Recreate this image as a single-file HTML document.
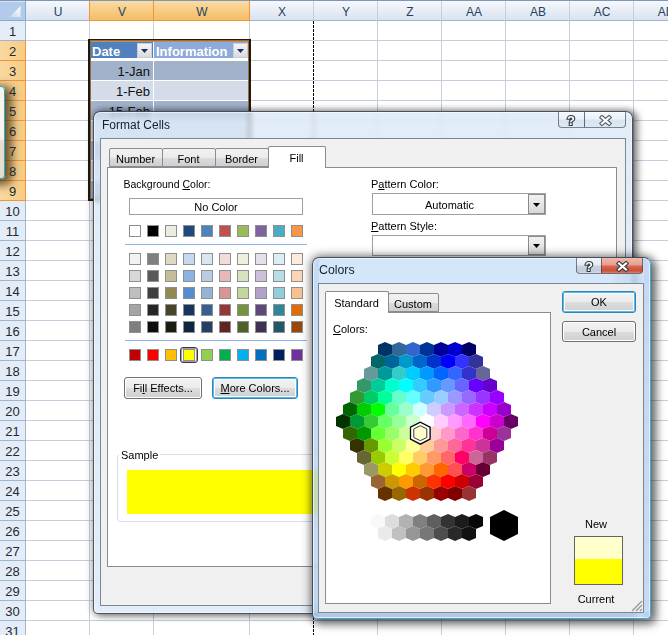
<!DOCTYPE html><html><head><meta charset="utf-8"><style>

*{box-sizing:border-box;margin:0;padding:0}
html,body{width:668px;height:635px;overflow:hidden;background:#fff;font-family:"Liberation Sans",sans-serif}
.abs{position:absolute}
.t{position:absolute;white-space:nowrap;line-height:1}

</style></head><body>
<div class="abs" style="left:89px;top:20px;width:1px;height:615px;background:#C8CDDD"></div>
<div class="abs" style="left:153px;top:20px;width:1px;height:615px;background:#C8CDDD"></div>
<div class="abs" style="left:249px;top:20px;width:1px;height:615px;background:#C8CDDD"></div>
<div class="abs" style="left:313px;top:20px;width:1px;height:615px;background:#C8CDDD"></div>
<div class="abs" style="left:377px;top:20px;width:1px;height:615px;background:#C8CDDD"></div>
<div class="abs" style="left:441px;top:20px;width:1px;height:615px;background:#C8CDDD"></div>
<div class="abs" style="left:505px;top:20px;width:1px;height:615px;background:#C8CDDD"></div>
<div class="abs" style="left:569px;top:20px;width:1px;height:615px;background:#C8CDDD"></div>
<div class="abs" style="left:633px;top:20px;width:1px;height:615px;background:#C8CDDD"></div>
<div class="abs" style="left:697px;top:20px;width:1px;height:615px;background:#C8CDDD"></div>
<div class="abs" style="left:25px;top:40px;width:643px;height:1px;background:#C8CDDD"></div>
<div class="abs" style="left:25px;top:60px;width:643px;height:1px;background:#C8CDDD"></div>
<div class="abs" style="left:25px;top:80px;width:643px;height:1px;background:#C8CDDD"></div>
<div class="abs" style="left:25px;top:100px;width:643px;height:1px;background:#C8CDDD"></div>
<div class="abs" style="left:25px;top:120px;width:643px;height:1px;background:#C8CDDD"></div>
<div class="abs" style="left:25px;top:140px;width:643px;height:1px;background:#C8CDDD"></div>
<div class="abs" style="left:25px;top:160px;width:643px;height:1px;background:#C8CDDD"></div>
<div class="abs" style="left:25px;top:180px;width:643px;height:1px;background:#C8CDDD"></div>
<div class="abs" style="left:25px;top:200px;width:643px;height:1px;background:#C8CDDD"></div>
<div class="abs" style="left:25px;top:220px;width:643px;height:1px;background:#C8CDDD"></div>
<div class="abs" style="left:25px;top:240px;width:643px;height:1px;background:#C8CDDD"></div>
<div class="abs" style="left:25px;top:260px;width:643px;height:1px;background:#C8CDDD"></div>
<div class="abs" style="left:25px;top:280px;width:643px;height:1px;background:#C8CDDD"></div>
<div class="abs" style="left:25px;top:300px;width:643px;height:1px;background:#C8CDDD"></div>
<div class="abs" style="left:25px;top:320px;width:643px;height:1px;background:#C8CDDD"></div>
<div class="abs" style="left:25px;top:340px;width:643px;height:1px;background:#C8CDDD"></div>
<div class="abs" style="left:25px;top:360px;width:643px;height:1px;background:#C8CDDD"></div>
<div class="abs" style="left:25px;top:380px;width:643px;height:1px;background:#C8CDDD"></div>
<div class="abs" style="left:25px;top:400px;width:643px;height:1px;background:#C8CDDD"></div>
<div class="abs" style="left:25px;top:420px;width:643px;height:1px;background:#C8CDDD"></div>
<div class="abs" style="left:25px;top:440px;width:643px;height:1px;background:#C8CDDD"></div>
<div class="abs" style="left:25px;top:460px;width:643px;height:1px;background:#C8CDDD"></div>
<div class="abs" style="left:25px;top:480px;width:643px;height:1px;background:#C8CDDD"></div>
<div class="abs" style="left:25px;top:500px;width:643px;height:1px;background:#C8CDDD"></div>
<div class="abs" style="left:25px;top:520px;width:643px;height:1px;background:#C8CDDD"></div>
<div class="abs" style="left:25px;top:540px;width:643px;height:1px;background:#C8CDDD"></div>
<div class="abs" style="left:25px;top:560px;width:643px;height:1px;background:#C8CDDD"></div>
<div class="abs" style="left:25px;top:580px;width:643px;height:1px;background:#C8CDDD"></div>
<div class="abs" style="left:25px;top:600px;width:643px;height:1px;background:#C8CDDD"></div>
<div class="abs" style="left:25px;top:620px;width:643px;height:1px;background:#C8CDDD"></div>
<div class="abs" style="left:313px;top:21px;width:1px;height:614px;background:repeating-linear-gradient(#000 0 3px,#fff 3px 4px)"></div>
<div class="abs" style="left:0;top:0;width:668px;height:1px;background:#7E97B8"></div>
<div class="abs" style="left:26px;top:1px;width:64px;height:20px;background:linear-gradient(#F6F8FC,#E4EBF5 60%,#DAE3F0);border-bottom:1px solid #9EB6CE;border-right:1px solid #C5D1E0"></div>
<div class="t" style="left:26px;width:64px;text-align:center;top:6px;font-size:12px;color:#27405E">U</div>
<div class="abs" style="left:90px;top:1px;width:64px;height:20px;background:linear-gradient(#F9DCA6,#F6C97C 60%,#F3BE67);border-bottom:1px solid #F29536;border-right:1px solid #F29536"></div>
<div class="t" style="left:90px;width:64px;text-align:center;top:6px;font-size:12px;color:#27405E">V</div>
<div class="abs" style="left:154px;top:1px;width:96px;height:20px;background:linear-gradient(#F9DCA6,#F6C97C 60%,#F3BE67);border-bottom:1px solid #F29536;border-right:1px solid #F29536"></div>
<div class="t" style="left:154px;width:96px;text-align:center;top:6px;font-size:12px;color:#27405E">W</div>
<div class="abs" style="left:250px;top:1px;width:64px;height:20px;background:linear-gradient(#F6F8FC,#E4EBF5 60%,#DAE3F0);border-bottom:1px solid #9EB6CE;border-right:1px solid #C5D1E0"></div>
<div class="t" style="left:250px;width:64px;text-align:center;top:6px;font-size:12px;color:#27405E">X</div>
<div class="abs" style="left:314px;top:1px;width:64px;height:20px;background:linear-gradient(#F6F8FC,#E4EBF5 60%,#DAE3F0);border-bottom:1px solid #9EB6CE;border-right:1px solid #C5D1E0"></div>
<div class="t" style="left:314px;width:64px;text-align:center;top:6px;font-size:12px;color:#27405E">Y</div>
<div class="abs" style="left:378px;top:1px;width:64px;height:20px;background:linear-gradient(#F6F8FC,#E4EBF5 60%,#DAE3F0);border-bottom:1px solid #9EB6CE;border-right:1px solid #C5D1E0"></div>
<div class="t" style="left:378px;width:64px;text-align:center;top:6px;font-size:12px;color:#27405E">Z</div>
<div class="abs" style="left:442px;top:1px;width:64px;height:20px;background:linear-gradient(#F6F8FC,#E4EBF5 60%,#DAE3F0);border-bottom:1px solid #9EB6CE;border-right:1px solid #C5D1E0"></div>
<div class="t" style="left:442px;width:64px;text-align:center;top:6px;font-size:12px;color:#27405E">AA</div>
<div class="abs" style="left:506px;top:1px;width:64px;height:20px;background:linear-gradient(#F6F8FC,#E4EBF5 60%,#DAE3F0);border-bottom:1px solid #9EB6CE;border-right:1px solid #C5D1E0"></div>
<div class="t" style="left:506px;width:64px;text-align:center;top:6px;font-size:12px;color:#27405E">AB</div>
<div class="abs" style="left:570px;top:1px;width:64px;height:20px;background:linear-gradient(#F6F8FC,#E4EBF5 60%,#DAE3F0);border-bottom:1px solid #9EB6CE;border-right:1px solid #C5D1E0"></div>
<div class="t" style="left:570px;width:64px;text-align:center;top:6px;font-size:12px;color:#27405E">AC</div>
<div class="abs" style="left:634px;top:1px;width:64px;height:20px;background:linear-gradient(#F6F8FC,#E4EBF5 60%,#DAE3F0);border-bottom:1px solid #9EB6CE;border-right:1px solid #C5D1E0"></div>
<div class="t" style="left:634px;width:64px;text-align:center;top:6px;font-size:12px;color:#27405E">AD</div>
<div class="abs" style="left:89px;top:1px;width:1px;height:20px;background:#F29536"></div>
<div class="abs" style="left:0;top:1px;width:26px;height:20px;background:#B3CBEA;border-right:1px solid #8CA8CC;border-bottom:1px solid #8CA8CC;box-shadow:inset 0 1px 0 #D6E4F6"></div>
<svg class="abs" style="left:0;top:0" width="25" height="21"><defs><linearGradient id="cg" x1="0" y1="1" x2="1" y2="0"><stop offset="0" stop-color="#C4D6EE"/><stop offset="1" stop-color="#FFFFFF"/></linearGradient></defs><polygon points="20.5,6 20.5,17 9.5,17" fill="url(#cg)"/></svg>
<div class="abs" style="left:0;top:21px;width:26px;height:20px;background:#E4ECF7;border-bottom:1px solid #9EB6CE;border-right:1px solid #9EB6CE"></div>
<div class="t" style="left:0;width:25px;text-align:center;top:25px;font-size:13px;color:#1E2A36">1</div>
<div class="abs" style="left:0;top:41px;width:26px;height:20px;background:linear-gradient(90deg,#F9D9A0,#F7CC84);border-bottom:1px solid #F29536;border-right:1px solid #F29536"></div>
<div class="t" style="left:0;width:25px;text-align:center;top:45px;font-size:13px;color:#1E2A36">2</div>
<div class="abs" style="left:0;top:61px;width:26px;height:20px;background:linear-gradient(90deg,#F9D9A0,#F7CC84);border-bottom:1px solid #F29536;border-right:1px solid #F29536"></div>
<div class="t" style="left:0;width:25px;text-align:center;top:65px;font-size:13px;color:#1E2A36">3</div>
<div class="abs" style="left:0;top:81px;width:26px;height:20px;background:linear-gradient(90deg,#F9D9A0,#F7CC84);border-bottom:1px solid #F29536;border-right:1px solid #F29536"></div>
<div class="t" style="left:0;width:25px;text-align:center;top:85px;font-size:13px;color:#1E2A36">4</div>
<div class="abs" style="left:0;top:101px;width:26px;height:20px;background:linear-gradient(90deg,#F9D9A0,#F7CC84);border-bottom:1px solid #F29536;border-right:1px solid #F29536"></div>
<div class="t" style="left:0;width:25px;text-align:center;top:105px;font-size:13px;color:#1E2A36">5</div>
<div class="abs" style="left:0;top:121px;width:26px;height:20px;background:linear-gradient(90deg,#F9D9A0,#F7CC84);border-bottom:1px solid #F29536;border-right:1px solid #F29536"></div>
<div class="t" style="left:0;width:25px;text-align:center;top:125px;font-size:13px;color:#1E2A36">6</div>
<div class="abs" style="left:0;top:141px;width:26px;height:20px;background:linear-gradient(90deg,#F9D9A0,#F7CC84);border-bottom:1px solid #F29536;border-right:1px solid #F29536"></div>
<div class="t" style="left:0;width:25px;text-align:center;top:145px;font-size:13px;color:#1E2A36">7</div>
<div class="abs" style="left:0;top:161px;width:26px;height:20px;background:linear-gradient(90deg,#F9D9A0,#F7CC84);border-bottom:1px solid #F29536;border-right:1px solid #F29536"></div>
<div class="t" style="left:0;width:25px;text-align:center;top:165px;font-size:13px;color:#1E2A36">8</div>
<div class="abs" style="left:0;top:181px;width:26px;height:20px;background:linear-gradient(90deg,#F9D9A0,#F7CC84);border-bottom:1px solid #F29536;border-right:1px solid #F29536"></div>
<div class="t" style="left:0;width:25px;text-align:center;top:185px;font-size:13px;color:#1E2A36">9</div>
<div class="abs" style="left:0;top:201px;width:26px;height:20px;background:#E4ECF7;border-bottom:1px solid #9EB6CE;border-right:1px solid #9EB6CE"></div>
<div class="t" style="left:0;width:25px;text-align:center;top:205px;font-size:13px;color:#1E2A36">10</div>
<div class="abs" style="left:0;top:221px;width:26px;height:20px;background:#E4ECF7;border-bottom:1px solid #9EB6CE;border-right:1px solid #9EB6CE"></div>
<div class="t" style="left:0;width:25px;text-align:center;top:225px;font-size:13px;color:#1E2A36">11</div>
<div class="abs" style="left:0;top:241px;width:26px;height:20px;background:#E4ECF7;border-bottom:1px solid #9EB6CE;border-right:1px solid #9EB6CE"></div>
<div class="t" style="left:0;width:25px;text-align:center;top:245px;font-size:13px;color:#1E2A36">12</div>
<div class="abs" style="left:0;top:261px;width:26px;height:20px;background:#E4ECF7;border-bottom:1px solid #9EB6CE;border-right:1px solid #9EB6CE"></div>
<div class="t" style="left:0;width:25px;text-align:center;top:265px;font-size:13px;color:#1E2A36">13</div>
<div class="abs" style="left:0;top:281px;width:26px;height:20px;background:#E4ECF7;border-bottom:1px solid #9EB6CE;border-right:1px solid #9EB6CE"></div>
<div class="t" style="left:0;width:25px;text-align:center;top:285px;font-size:13px;color:#1E2A36">14</div>
<div class="abs" style="left:0;top:301px;width:26px;height:20px;background:#E4ECF7;border-bottom:1px solid #9EB6CE;border-right:1px solid #9EB6CE"></div>
<div class="t" style="left:0;width:25px;text-align:center;top:305px;font-size:13px;color:#1E2A36">15</div>
<div class="abs" style="left:0;top:321px;width:26px;height:20px;background:#E4ECF7;border-bottom:1px solid #9EB6CE;border-right:1px solid #9EB6CE"></div>
<div class="t" style="left:0;width:25px;text-align:center;top:325px;font-size:13px;color:#1E2A36">16</div>
<div class="abs" style="left:0;top:341px;width:26px;height:20px;background:#E4ECF7;border-bottom:1px solid #9EB6CE;border-right:1px solid #9EB6CE"></div>
<div class="t" style="left:0;width:25px;text-align:center;top:345px;font-size:13px;color:#1E2A36">17</div>
<div class="abs" style="left:0;top:361px;width:26px;height:20px;background:#E4ECF7;border-bottom:1px solid #9EB6CE;border-right:1px solid #9EB6CE"></div>
<div class="t" style="left:0;width:25px;text-align:center;top:365px;font-size:13px;color:#1E2A36">18</div>
<div class="abs" style="left:0;top:381px;width:26px;height:20px;background:#E4ECF7;border-bottom:1px solid #9EB6CE;border-right:1px solid #9EB6CE"></div>
<div class="t" style="left:0;width:25px;text-align:center;top:385px;font-size:13px;color:#1E2A36">19</div>
<div class="abs" style="left:0;top:401px;width:26px;height:20px;background:#E4ECF7;border-bottom:1px solid #9EB6CE;border-right:1px solid #9EB6CE"></div>
<div class="t" style="left:0;width:25px;text-align:center;top:405px;font-size:13px;color:#1E2A36">20</div>
<div class="abs" style="left:0;top:421px;width:26px;height:20px;background:#E4ECF7;border-bottom:1px solid #9EB6CE;border-right:1px solid #9EB6CE"></div>
<div class="t" style="left:0;width:25px;text-align:center;top:425px;font-size:13px;color:#1E2A36">21</div>
<div class="abs" style="left:0;top:441px;width:26px;height:20px;background:#E4ECF7;border-bottom:1px solid #9EB6CE;border-right:1px solid #9EB6CE"></div>
<div class="t" style="left:0;width:25px;text-align:center;top:445px;font-size:13px;color:#1E2A36">22</div>
<div class="abs" style="left:0;top:461px;width:26px;height:20px;background:#E4ECF7;border-bottom:1px solid #9EB6CE;border-right:1px solid #9EB6CE"></div>
<div class="t" style="left:0;width:25px;text-align:center;top:465px;font-size:13px;color:#1E2A36">23</div>
<div class="abs" style="left:0;top:481px;width:26px;height:20px;background:#E4ECF7;border-bottom:1px solid #9EB6CE;border-right:1px solid #9EB6CE"></div>
<div class="t" style="left:0;width:25px;text-align:center;top:485px;font-size:13px;color:#1E2A36">24</div>
<div class="abs" style="left:0;top:501px;width:26px;height:20px;background:#E4ECF7;border-bottom:1px solid #9EB6CE;border-right:1px solid #9EB6CE"></div>
<div class="t" style="left:0;width:25px;text-align:center;top:505px;font-size:13px;color:#1E2A36">25</div>
<div class="abs" style="left:0;top:521px;width:26px;height:20px;background:#E4ECF7;border-bottom:1px solid #9EB6CE;border-right:1px solid #9EB6CE"></div>
<div class="t" style="left:0;width:25px;text-align:center;top:525px;font-size:13px;color:#1E2A36">26</div>
<div class="abs" style="left:0;top:541px;width:26px;height:20px;background:#E4ECF7;border-bottom:1px solid #9EB6CE;border-right:1px solid #9EB6CE"></div>
<div class="t" style="left:0;width:25px;text-align:center;top:545px;font-size:13px;color:#1E2A36">27</div>
<div class="abs" style="left:0;top:561px;width:26px;height:20px;background:#E4ECF7;border-bottom:1px solid #9EB6CE;border-right:1px solid #9EB6CE"></div>
<div class="t" style="left:0;width:25px;text-align:center;top:565px;font-size:13px;color:#1E2A36">28</div>
<div class="abs" style="left:0;top:581px;width:26px;height:20px;background:#E4ECF7;border-bottom:1px solid #9EB6CE;border-right:1px solid #9EB6CE"></div>
<div class="t" style="left:0;width:25px;text-align:center;top:585px;font-size:13px;color:#1E2A36">29</div>
<div class="abs" style="left:0;top:601px;width:26px;height:20px;background:#E4ECF7;border-bottom:1px solid #9EB6CE;border-right:1px solid #9EB6CE"></div>
<div class="t" style="left:0;width:25px;text-align:center;top:605px;font-size:13px;color:#1E2A36">30</div>
<div class="abs" style="left:0;top:621px;width:26px;height:20px;background:#E4ECF7;border-bottom:1px solid #9EB6CE;border-right:1px solid #9EB6CE"></div>
<div class="t" style="left:0;width:25px;text-align:center;top:625px;font-size:13px;color:#1E2A36">31</div>
<div class="abs" style="left:89px;top:40px;width:161px;height:160px;background:#fff"></div>
<div class="abs" style="left:91px;top:42px;width:62px;height:16px;background:#5080BE"></div>
<div class="abs" style="left:154px;top:42px;width:94px;height:16px;background:#8DAADA"></div>
<div class="abs" style="left:91px;top:61px;width:62px;height:19px;background:#A3B2CB"></div>
<div class="abs" style="left:154px;top:61px;width:94px;height:19px;background:#A3B2CB"></div>
<div class="abs" style="left:91px;top:81px;width:62px;height:19px;background:#D4DCEA"></div>
<div class="abs" style="left:154px;top:81px;width:94px;height:19px;background:#D4DCEA"></div>
<div class="abs" style="left:91px;top:101px;width:62px;height:19px;background:#A3B2CB"></div>
<div class="abs" style="left:154px;top:101px;width:94px;height:19px;background:#A3B2CB"></div>
<div class="abs" style="left:91px;top:121px;width:62px;height:19px;background:#D4DCEA"></div>
<div class="abs" style="left:154px;top:121px;width:94px;height:19px;background:#D4DCEA"></div>
<div class="abs" style="left:91px;top:141px;width:62px;height:19px;background:#A3B2CB"></div>
<div class="abs" style="left:154px;top:141px;width:94px;height:19px;background:#A3B2CB"></div>
<div class="abs" style="left:91px;top:161px;width:62px;height:19px;background:#D4DCEA"></div>
<div class="abs" style="left:154px;top:161px;width:94px;height:19px;background:#D4DCEA"></div>
<div class="abs" style="left:91px;top:181px;width:62px;height:19px;background:#A3B2CB"></div>
<div class="abs" style="left:154px;top:181px;width:94px;height:19px;background:#A3B2CB"></div>
<div class="abs" style="left:88px;top:39px;width:163px;height:162px;border:2px solid #1E1812;border-top-width:1px;box-shadow:inset 0 0 0 1px #9A6A38"></div>
<div class="abs" style="left:91px;top:41px;width:157px;height:1px;background:#C98F4E"></div>
<div class="t" style="left:92px;top:45px;font-size:13px;font-weight:bold;color:#fff">Date</div>
<div class="t" style="left:156px;top:45px;font-size:13px;font-weight:bold;color:#fff">Information</div>
<div class="abs" style="left:137px;top:43px;width:15px;height:15px;background:linear-gradient(#F4F4F4,#DCDCDC);border:1px solid #C9CFD8"></div>
<svg class="abs" style="left:137px;top:43px" width="15" height="15"><polygon points="4,6 11,6 7.5,10" fill="#1F2F6A"/></svg>
<div class="abs" style="left:233px;top:43px;width:15px;height:15px;background:linear-gradient(#F4F4F4,#DCDCDC);border:1px solid #C9CFD8"></div>
<svg class="abs" style="left:233px;top:43px" width="15" height="15"><polygon points="4,6 11,6 7.5,10" fill="#1F2F6A"/></svg>
<div class="t" style="right:518px;top:65px;font-size:13px;color:#111">1-Jan</div>
<div class="t" style="right:518px;top:85px;font-size:13px;color:#111">1-Feb</div>
<div class="t" style="right:518px;top:105px;font-size:13px;color:#111">15-Feb</div>
<div class="abs" style="left:-20px;top:86px;width:25px;height:93px;background:linear-gradient(#F6F4EF 56%,#E2DED4 60%);border:1.5px solid #2AA8BC;border-radius:4px;box-shadow:4px 3px 10px 3px rgba(60,40,10,0.75)"></div>
<div class="abs" style="left:0;top:0;width:668px;height:635px;z-index:10"><div class="abs" style="left:93px;top:111px;width:540px;height:503px;border-radius:7px 7px 5px 5px;border:1px solid rgba(20,30,45,0.75);background:rgba(215,230,247,0.72);backdrop-filter:blur(2.5px);box-shadow:0 0 7px 1px rgba(0,0,0,0.3), 4px 1px 7px 1px rgba(0,0,0,0.4), inset 0 0 0 1px rgba(255,255,255,0.6)"></div>
<div class="t" style="left:102px;top:119px;font-size:12px;color:#15202C">Format Cells</div>
<div class="abs" style="left:558px;top:112px;width:27px;height:16px;border:1px solid rgba(40,50,70,0.6);border-top:none;border-radius:0 0 0 4px;background:linear-gradient(rgba(252,253,255,0.75),rgba(238,244,250,0.6) 45%,rgba(212,224,238,0.6) 55%,rgba(220,230,242,0.6))"></div>
<div class="abs" style="left:584px;top:112px;width:42px;height:16px;border:1px solid rgba(40,50,70,0.6);border-top:none;border-radius:0 0 4px 0;background:linear-gradient(rgba(252,253,255,0.75),rgba(238,244,250,0.6) 45%,rgba(212,224,238,0.6) 55%,rgba(220,230,242,0.6))"></div>
<svg class="abs" style="left:565.0px;top:113.0px" width="12" height="14"><text x="6" y="12" text-anchor="middle" font-family="Liberation Sans" font-weight="bold" font-size="13" fill="#fff" stroke="#2E3640" stroke-width="2.2" paint-order="stroke fill">?</text></svg>
<svg class="abs" style="left:598.5px;top:114.5px" width="13" height="12"><path d="M3 2.5 L10 8.5 M10 2.5 L3 8.5" stroke="#5A626C" stroke-width="4.4" stroke-linecap="square"/><path d="M3 2.5 L10 8.5 M10 2.5 L3 8.5" stroke="#fff" stroke-width="2.2" stroke-linecap="square"/></svg>
<div class="abs" style="left:100px;top:138px;width:526px;height:468px;background:#F0F0F0;border:1px solid #7C8794"></div>
<div class="abs" style="left:109px;top:148px;width:54px;height:19px;background:linear-gradient(#F2F2F2,#EBEBEB 50%,#DDDDDD 51%,#CFCFCF);border:1px solid #898C95;border-radius:2px 2px 0 0;z-index:1"></div>
<div class="t" style="left:109px;width:53px;text-align:center;top:153.5px;font-size:11px;color:#000;z-index:3">Number</div>
<div class="abs" style="left:162px;top:148px;width:54px;height:19px;background:linear-gradient(#F2F2F2,#EBEBEB 50%,#DDDDDD 51%,#CFCFCF);border:1px solid #898C95;border-radius:2px 2px 0 0;z-index:1"></div>
<div class="t" style="left:162px;width:53px;text-align:center;top:153.5px;font-size:11px;color:#000;z-index:3">Font</div>
<div class="abs" style="left:215px;top:148px;width:54px;height:19px;background:linear-gradient(#F2F2F2,#EBEBEB 50%,#DDDDDD 51%,#CFCFCF);border:1px solid #898C95;border-radius:2px 2px 0 0;z-index:1"></div>
<div class="t" style="left:215px;width:53px;text-align:center;top:153.5px;font-size:11px;color:#000;z-index:3">Border</div>
<div class="abs" style="left:107px;top:167px;width:510px;height:400px;background:#fff;border:1px solid #898C95;z-index:1"></div>
<div class="abs" style="left:268px;top:146px;width:58px;height:22px;background:#fff;border:1px solid #898C95;border-bottom:none;border-radius:2px 2px 0 0;z-index:2"></div>
<div class="t" style="left:268px;width:57px;text-align:center;top:152.5px;font-size:11px;color:#000;z-index:3">Fill</div>
<div class="t" style="left:123.5px;top:179px;font-size:10.5px;color:#000;z-index:4">Background <u>C</u>olor:</div>
<div class="abs" style="left:129px;top:198px;width:174px;height:17px;border:1px solid #A0A0A0;background:#fff;z-index:4"></div>
<div class="t" style="left:129px;width:174px;text-align:center;top:202px;font-size:11px;color:#000;z-index:4">No Color</div>
<div class="abs" style="left:129px;top:225px;width:12px;height:12px;background:#FFFFFF;border:1px solid #8E8F8F;z-index:4"></div>
<div class="abs" style="left:147px;top:225px;width:12px;height:12px;background:#000000;border:1px solid #8E8F8F;z-index:4"></div>
<div class="abs" style="left:165px;top:225px;width:12px;height:12px;background:#EEECE1;border:1px solid #8E8F8F;z-index:4"></div>
<div class="abs" style="left:183px;top:225px;width:12px;height:12px;background:#1F497D;border:1px solid #8E8F8F;z-index:4"></div>
<div class="abs" style="left:201px;top:225px;width:12px;height:12px;background:#4F81BD;border:1px solid #8E8F8F;z-index:4"></div>
<div class="abs" style="left:219px;top:225px;width:12px;height:12px;background:#C0504D;border:1px solid #8E8F8F;z-index:4"></div>
<div class="abs" style="left:237px;top:225px;width:12px;height:12px;background:#9BBB59;border:1px solid #8E8F8F;z-index:4"></div>
<div class="abs" style="left:255px;top:225px;width:12px;height:12px;background:#8064A2;border:1px solid #8E8F8F;z-index:4"></div>
<div class="abs" style="left:273px;top:225px;width:12px;height:12px;background:#4BACC6;border:1px solid #8E8F8F;z-index:4"></div>
<div class="abs" style="left:291px;top:225px;width:12px;height:12px;background:#F79646;border:1px solid #8E8F8F;z-index:4"></div>
<div class="abs" style="left:129px;top:253px;width:12px;height:12px;background:#F2F2F2;border:1px solid #8E8F8F;z-index:4"></div>
<div class="abs" style="left:147px;top:253px;width:12px;height:12px;background:#7F7F7F;border:1px solid #8E8F8F;z-index:4"></div>
<div class="abs" style="left:165px;top:253px;width:12px;height:12px;background:#DDD9C3;border:1px solid #8E8F8F;z-index:4"></div>
<div class="abs" style="left:183px;top:253px;width:12px;height:12px;background:#C6D9F0;border:1px solid #8E8F8F;z-index:4"></div>
<div class="abs" style="left:201px;top:253px;width:12px;height:12px;background:#DBE5F1;border:1px solid #8E8F8F;z-index:4"></div>
<div class="abs" style="left:219px;top:253px;width:12px;height:12px;background:#F2DCDB;border:1px solid #8E8F8F;z-index:4"></div>
<div class="abs" style="left:237px;top:253px;width:12px;height:12px;background:#EBF1DD;border:1px solid #8E8F8F;z-index:4"></div>
<div class="abs" style="left:255px;top:253px;width:12px;height:12px;background:#E5E0EC;border:1px solid #8E8F8F;z-index:4"></div>
<div class="abs" style="left:273px;top:253px;width:12px;height:12px;background:#DBEEF3;border:1px solid #8E8F8F;z-index:4"></div>
<div class="abs" style="left:291px;top:253px;width:12px;height:12px;background:#FDEADA;border:1px solid #8E8F8F;z-index:4"></div>
<div class="abs" style="left:129px;top:270px;width:12px;height:12px;background:#D8D8D8;border:1px solid #8E8F8F;z-index:4"></div>
<div class="abs" style="left:147px;top:270px;width:12px;height:12px;background:#595959;border:1px solid #8E8F8F;z-index:4"></div>
<div class="abs" style="left:165px;top:270px;width:12px;height:12px;background:#C4BD97;border:1px solid #8E8F8F;z-index:4"></div>
<div class="abs" style="left:183px;top:270px;width:12px;height:12px;background:#8DB3E2;border:1px solid #8E8F8F;z-index:4"></div>
<div class="abs" style="left:201px;top:270px;width:12px;height:12px;background:#B8CCE4;border:1px solid #8E8F8F;z-index:4"></div>
<div class="abs" style="left:219px;top:270px;width:12px;height:12px;background:#E5B9B7;border:1px solid #8E8F8F;z-index:4"></div>
<div class="abs" style="left:237px;top:270px;width:12px;height:12px;background:#D7E3BC;border:1px solid #8E8F8F;z-index:4"></div>
<div class="abs" style="left:255px;top:270px;width:12px;height:12px;background:#CCC1D9;border:1px solid #8E8F8F;z-index:4"></div>
<div class="abs" style="left:273px;top:270px;width:12px;height:12px;background:#B7DDE8;border:1px solid #8E8F8F;z-index:4"></div>
<div class="abs" style="left:291px;top:270px;width:12px;height:12px;background:#FBD5B5;border:1px solid #8E8F8F;z-index:4"></div>
<div class="abs" style="left:129px;top:287px;width:12px;height:12px;background:#BFBFBF;border:1px solid #8E8F8F;z-index:4"></div>
<div class="abs" style="left:147px;top:287px;width:12px;height:12px;background:#3F3F3F;border:1px solid #8E8F8F;z-index:4"></div>
<div class="abs" style="left:165px;top:287px;width:12px;height:12px;background:#938953;border:1px solid #8E8F8F;z-index:4"></div>
<div class="abs" style="left:183px;top:287px;width:12px;height:12px;background:#548DD4;border:1px solid #8E8F8F;z-index:4"></div>
<div class="abs" style="left:201px;top:287px;width:12px;height:12px;background:#95B3D7;border:1px solid #8E8F8F;z-index:4"></div>
<div class="abs" style="left:219px;top:287px;width:12px;height:12px;background:#D99694;border:1px solid #8E8F8F;z-index:4"></div>
<div class="abs" style="left:237px;top:287px;width:12px;height:12px;background:#C3D69B;border:1px solid #8E8F8F;z-index:4"></div>
<div class="abs" style="left:255px;top:287px;width:12px;height:12px;background:#B2A2C7;border:1px solid #8E8F8F;z-index:4"></div>
<div class="abs" style="left:273px;top:287px;width:12px;height:12px;background:#92CDDC;border:1px solid #8E8F8F;z-index:4"></div>
<div class="abs" style="left:291px;top:287px;width:12px;height:12px;background:#FAC08F;border:1px solid #8E8F8F;z-index:4"></div>
<div class="abs" style="left:129px;top:304px;width:12px;height:12px;background:#A5A5A5;border:1px solid #8E8F8F;z-index:4"></div>
<div class="abs" style="left:147px;top:304px;width:12px;height:12px;background:#262626;border:1px solid #8E8F8F;z-index:4"></div>
<div class="abs" style="left:165px;top:304px;width:12px;height:12px;background:#494429;border:1px solid #8E8F8F;z-index:4"></div>
<div class="abs" style="left:183px;top:304px;width:12px;height:12px;background:#17365D;border:1px solid #8E8F8F;z-index:4"></div>
<div class="abs" style="left:201px;top:304px;width:12px;height:12px;background:#366092;border:1px solid #8E8F8F;z-index:4"></div>
<div class="abs" style="left:219px;top:304px;width:12px;height:12px;background:#953734;border:1px solid #8E8F8F;z-index:4"></div>
<div class="abs" style="left:237px;top:304px;width:12px;height:12px;background:#76923C;border:1px solid #8E8F8F;z-index:4"></div>
<div class="abs" style="left:255px;top:304px;width:12px;height:12px;background:#5F497A;border:1px solid #8E8F8F;z-index:4"></div>
<div class="abs" style="left:273px;top:304px;width:12px;height:12px;background:#31859B;border:1px solid #8E8F8F;z-index:4"></div>
<div class="abs" style="left:291px;top:304px;width:12px;height:12px;background:#E36C09;border:1px solid #8E8F8F;z-index:4"></div>
<div class="abs" style="left:129px;top:321px;width:12px;height:12px;background:#7F7F7F;border:1px solid #8E8F8F;z-index:4"></div>
<div class="abs" style="left:147px;top:321px;width:12px;height:12px;background:#0C0C0C;border:1px solid #8E8F8F;z-index:4"></div>
<div class="abs" style="left:165px;top:321px;width:12px;height:12px;background:#1D1B10;border:1px solid #8E8F8F;z-index:4"></div>
<div class="abs" style="left:183px;top:321px;width:12px;height:12px;background:#0F243E;border:1px solid #8E8F8F;z-index:4"></div>
<div class="abs" style="left:201px;top:321px;width:12px;height:12px;background:#244061;border:1px solid #8E8F8F;z-index:4"></div>
<div class="abs" style="left:219px;top:321px;width:12px;height:12px;background:#632423;border:1px solid #8E8F8F;z-index:4"></div>
<div class="abs" style="left:237px;top:321px;width:12px;height:12px;background:#4F6128;border:1px solid #8E8F8F;z-index:4"></div>
<div class="abs" style="left:255px;top:321px;width:12px;height:12px;background:#3F3151;border:1px solid #8E8F8F;z-index:4"></div>
<div class="abs" style="left:273px;top:321px;width:12px;height:12px;background:#205867;border:1px solid #8E8F8F;z-index:4"></div>
<div class="abs" style="left:291px;top:321px;width:12px;height:12px;background:#974806;border:1px solid #8E8F8F;z-index:4"></div>
<div class="abs" style="left:129px;top:349px;width:12px;height:12px;background:#C00000;border:1px solid #8E8F8F;z-index:4"></div>
<div class="abs" style="left:147px;top:349px;width:12px;height:12px;background:#FF0000;border:1px solid #8E8F8F;z-index:4"></div>
<div class="abs" style="left:165px;top:349px;width:12px;height:12px;background:#FFC000;border:1px solid #8E8F8F;z-index:4"></div>
<div class="abs" style="left:183px;top:349px;width:12px;height:12px;background:#FFFF00;border:1px solid #8E8F8F;z-index:4"></div>
<div class="abs" style="left:201px;top:349px;width:12px;height:12px;background:#92D050;border:1px solid #8E8F8F;z-index:4"></div>
<div class="abs" style="left:219px;top:349px;width:12px;height:12px;background:#00B050;border:1px solid #8E8F8F;z-index:4"></div>
<div class="abs" style="left:237px;top:349px;width:12px;height:12px;background:#00B0F0;border:1px solid #8E8F8F;z-index:4"></div>
<div class="abs" style="left:255px;top:349px;width:12px;height:12px;background:#0070C0;border:1px solid #8E8F8F;z-index:4"></div>
<div class="abs" style="left:273px;top:349px;width:12px;height:12px;background:#002060;border:1px solid #8E8F8F;z-index:4"></div>
<div class="abs" style="left:291px;top:349px;width:12px;height:12px;background:#7030A0;border:1px solid #8E8F8F;z-index:4"></div>
<div class="abs" style="left:180px;top:347px;width:18px;height:16px;border:1px solid #3A3A3A;border-radius:3px;box-shadow:inset 0 0 0 1px #A0A0A0;z-index:4"></div>
<div class="abs" style="left:125px;top:244px;width:182px;height:1px;background:#8DB2E3;z-index:4"></div>
<div class="abs" style="left:125px;top:340px;width:182px;height:1px;background:#8DB2E3;z-index:4"></div>
<div class="abs" style="left:124px;top:377px;width:78px;height:22px;border:1px solid #707070;border-radius:3px;background:linear-gradient(#F2F2F2,#EBEBEB 50%,#DDDDDD 51%,#CFCFCF);box-shadow:inset 0 0 0 1px #fff;z-index:4"></div>
<div class="t" style="left:124px;width:78px;text-align:center;top:383.0px;font-size:11px;color:#000;z-index:5">Fi<u>l</u>l Effects...</div>
<div class="abs" style="left:212px;top:377px;width:86px;height:22px;border:1px solid #3C7FB1;border-radius:3px;background:linear-gradient(#F2F2F2,#EBEBEB 50%,#DDDDDD 51%,#CFCFCF);box-shadow:inset 0 0 0 1px #48C0F0, inset 0 0 0 2px #fff;z-index:4"></div>
<div class="t" style="left:212px;width:86px;text-align:center;top:383.0px;font-size:11px;color:#000;z-index:5"><u>M</u>ore Colors...</div>
<div class="abs" style="left:117px;top:454px;width:260px;height:68px;border:1px solid #D5DFE5;border-radius:3px;z-index:4"></div>
<div class="t" style="left:119px;top:450px;padding:0 2px;background:#fff;font-size:11px;color:#000;z-index:5">Sample</div>
<div class="abs" style="left:127px;top:470px;width:250px;height:44px;background:#FFFF00;z-index:5"></div>
<div class="t" style="left:371px;top:179px;font-size:11px;color:#000;z-index:4">P<u>a</u>ttern Color:</div>
<div class="abs" style="left:372px;top:193px;width:174px;height:22px;border:1px solid #A0A0A0;background:#fff;z-index:4"></div>
<div class="t" style="left:372px;width:155px;text-align:center;top:200px;font-size:11px;color:#000;z-index:5">Automatic</div>
<div class="abs" style="left:528px;top:194px;width:17px;height:20px;border:1px solid #8A8A8A;background:linear-gradient(#F2F2F2,#D8D8D8);z-index:5"></div>
<svg class="abs" style="left:528px;top:195px;z-index:6" width="17" height="19"><polygon points="5,8 12,8 8.5,12" fill="#000"/></svg>
<div class="t" style="left:371px;top:221px;font-size:11px;color:#000;z-index:4"><u>P</u>attern Style:</div>
<div class="abs" style="left:372px;top:235px;width:174px;height:21px;border:1px solid #A0A0A0;background:#fff;z-index:4"></div>
<div class="abs" style="left:528px;top:236px;width:17px;height:19px;border:1px solid #8A8A8A;background:linear-gradient(#F2F2F2,#D8D8D8);z-index:5"></div>
<svg class="abs" style="left:528px;top:236px;z-index:6" width="17" height="19"><polygon points="5,8 12,8 8.5,12" fill="#000"/></svg></div>
<div class="abs" style="left:0;top:0;width:668px;height:635px;z-index:20"><div class="abs" style="left:312px;top:257px;width:339px;height:362px;border-radius:7px 7px 5px 5px;border:1px solid rgba(20,30,45,0.75);border-bottom-color:#38A8DC;border-right-color:#38A8DC;background:rgba(196,222,248,0.72);backdrop-filter:blur(2.5px);box-shadow:0 0 10px 2px rgba(0,0,0,0.4), 4px 4px 9px 2px rgba(0,0,0,0.4), inset 0 0 0 1px rgba(255,255,255,0.6), inset 6px 0 0 0 rgba(120,160,210,0.18), inset -6px 0 0 0 rgba(120,160,210,0.18), inset 0 -6px 0 0 rgba(120,160,210,0.18)"></div>
<div class="t" style="left:319px;top:263.5px;font-size:12.3px;color:#15202C">Colors</div>
<div class="abs" style="left:576px;top:258px;width:26px;height:16px;border:1px solid rgba(40,50,70,0.6);border-top:none;border-radius:0 0 0 4px;background:linear-gradient(#F2F6FA,#E4EBF2 45%,#C8D3DE 55%,#C0CCD8 85%,#D2DCE6)"></div>
<div class="abs" style="left:601px;top:258px;width:42px;height:16px;border:1px solid rgba(40,50,70,0.6);border-top:none;border-radius:0 0 4px 0;background:linear-gradient(#F0B8AC,#E6A090 45%,#D6664C 55%,#CC5038 85%,#DC8068)"></div>
<svg class="abs" style="left:582.5px;top:259.0px" width="12" height="14"><text x="6" y="12" text-anchor="middle" font-family="Liberation Sans" font-weight="bold" font-size="13" fill="#fff" stroke="#2E3640" stroke-width="2.2" paint-order="stroke fill">?</text></svg>
<svg class="abs" style="left:615.5px;top:260.5px" width="13" height="12"><path d="M3 2.5 L10 8.5 M10 2.5 L3 8.5" stroke="#3A4048" stroke-width="4.4" stroke-linecap="square"/><path d="M3 2.5 L10 8.5 M10 2.5 L3 8.5" stroke="#fff" stroke-width="2.2" stroke-linecap="square"/></svg>
<div class="abs" style="left:318px;top:283px;width:326px;height:330px;background:#F0F0F0;border:1px solid #7C8794"></div>
<div class="abs" style="left:388px;top:293px;width:51px;height:19px;background:linear-gradient(#F2F2F2,#EBEBEB 50%,#DDDDDD 51%,#CFCFCF);border:1px solid #898C95;border-radius:2px 2px 0 0;z-index:1"></div>
<div class="t" style="left:388px;width:50px;text-align:center;top:298.5px;font-size:11px;color:#000;z-index:3">Custom</div>
<div class="abs" style="left:325px;top:312px;width:226px;height:292px;background:#fff;border:1px solid #898C95;z-index:1"></div>
<div class="abs" style="left:325px;top:291px;width:64px;height:22px;background:#fff;border:1px solid #898C95;border-bottom:none;border-radius:2px 2px 0 0;z-index:2"></div>
<div class="t" style="left:325px;width:63px;text-align:center;top:297.5px;font-size:11px;color:#000;z-index:3">Standard</div>
<div class="t" style="left:333px;top:324px;font-size:11px;color:#000;z-index:4"><u>C</u>olors:</div>
<svg class="abs" style="left:325px;top:312px;z-index:4" width="226" height="292"><polygon points="53.0,33.0 60.0,30.0 67.0,33.0 67.0,42.0 60.0,45.0 53.0,42.0" fill="#003366"/><polygon points="67.0,33.0 74.0,30.0 81.0,33.0 81.0,42.0 74.0,45.0 67.0,42.0" fill="#336699"/><polygon points="81.0,33.0 88.0,30.0 95.0,33.0 95.0,42.0 88.0,45.0 81.0,42.0" fill="#3366CC"/><polygon points="95.0,33.0 102.0,30.0 109.0,33.0 109.0,42.0 102.0,45.0 95.0,42.0" fill="#003399"/><polygon points="109.0,33.0 116.0,30.0 123.0,33.0 123.0,42.0 116.0,45.0 109.0,42.0" fill="#000099"/><polygon points="123.0,33.0 130.0,30.0 137.0,33.0 137.0,42.0 130.0,45.0 123.0,42.0" fill="#0000CC"/><polygon points="137.0,33.0 144.0,30.0 151.0,33.0 151.0,42.0 144.0,45.0 137.0,42.0" fill="#000066"/><polygon points="46.0,45.0 53.0,42.0 60.0,45.0 60.0,54.0 53.0,57.0 46.0,54.0" fill="#006666"/><polygon points="60.0,45.0 67.0,42.0 74.0,45.0 74.0,54.0 67.0,57.0 60.0,54.0" fill="#006699"/><polygon points="74.0,45.0 81.0,42.0 88.0,45.0 88.0,54.0 81.0,57.0 74.0,54.0" fill="#0099CC"/><polygon points="88.0,45.0 95.0,42.0 102.0,45.0 102.0,54.0 95.0,57.0 88.0,54.0" fill="#0066CC"/><polygon points="102.0,45.0 109.0,42.0 116.0,45.0 116.0,54.0 109.0,57.0 102.0,54.0" fill="#0033CC"/><polygon points="116.0,45.0 123.0,42.0 130.0,45.0 130.0,54.0 123.0,57.0 116.0,54.0" fill="#0000FF"/><polygon points="130.0,45.0 137.0,42.0 144.0,45.0 144.0,54.0 137.0,57.0 130.0,54.0" fill="#3333FF"/><polygon points="144.0,45.0 151.0,42.0 158.0,45.0 158.0,54.0 151.0,57.0 144.0,54.0" fill="#333399"/><polygon points="39.0,57.0 46.0,54.0 53.0,57.0 53.0,66.0 46.0,69.0 39.0,66.0" fill="#669999"/><polygon points="53.0,57.0 60.0,54.0 67.0,57.0 67.0,66.0 60.0,69.0 53.0,66.0" fill="#009999"/><polygon points="67.0,57.0 74.0,54.0 81.0,57.0 81.0,66.0 74.0,69.0 67.0,66.0" fill="#33CCCC"/><polygon points="81.0,57.0 88.0,54.0 95.0,57.0 95.0,66.0 88.0,69.0 81.0,66.0" fill="#00CCFF"/><polygon points="95.0,57.0 102.0,54.0 109.0,57.0 109.0,66.0 102.0,69.0 95.0,66.0" fill="#0099FF"/><polygon points="109.0,57.0 116.0,54.0 123.0,57.0 123.0,66.0 116.0,69.0 109.0,66.0" fill="#0066FF"/><polygon points="123.0,57.0 130.0,54.0 137.0,57.0 137.0,66.0 130.0,69.0 123.0,66.0" fill="#3366FF"/><polygon points="137.0,57.0 144.0,54.0 151.0,57.0 151.0,66.0 144.0,69.0 137.0,66.0" fill="#3333CC"/><polygon points="151.0,57.0 158.0,54.0 165.0,57.0 165.0,66.0 158.0,69.0 151.0,66.0" fill="#666699"/><polygon points="32.0,69.0 39.0,66.0 46.0,69.0 46.0,78.0 39.0,81.0 32.0,78.0" fill="#339966"/><polygon points="46.0,69.0 53.0,66.0 60.0,69.0 60.0,78.0 53.0,81.0 46.0,78.0" fill="#00CC99"/><polygon points="60.0,69.0 67.0,66.0 74.0,69.0 74.0,78.0 67.0,81.0 60.0,78.0" fill="#00FFCC"/><polygon points="74.0,69.0 81.0,66.0 88.0,69.0 88.0,78.0 81.0,81.0 74.0,78.0" fill="#00FFFF"/><polygon points="88.0,69.0 95.0,66.0 102.0,69.0 102.0,78.0 95.0,81.0 88.0,78.0" fill="#33CCFF"/><polygon points="102.0,69.0 109.0,66.0 116.0,69.0 116.0,78.0 109.0,81.0 102.0,78.0" fill="#3399FF"/><polygon points="116.0,69.0 123.0,66.0 130.0,69.0 130.0,78.0 123.0,81.0 116.0,78.0" fill="#6699FF"/><polygon points="130.0,69.0 137.0,66.0 144.0,69.0 144.0,78.0 137.0,81.0 130.0,78.0" fill="#6666FF"/><polygon points="144.0,69.0 151.0,66.0 158.0,69.0 158.0,78.0 151.0,81.0 144.0,78.0" fill="#6600FF"/><polygon points="158.0,69.0 165.0,66.0 172.0,69.0 172.0,78.0 165.0,81.0 158.0,78.0" fill="#6600CC"/><polygon points="25.0,81.0 32.0,78.0 39.0,81.0 39.0,90.0 32.0,93.0 25.0,90.0" fill="#339933"/><polygon points="39.0,81.0 46.0,78.0 53.0,81.0 53.0,90.0 46.0,93.0 39.0,90.0" fill="#00CC66"/><polygon points="53.0,81.0 60.0,78.0 67.0,81.0 67.0,90.0 60.0,93.0 53.0,90.0" fill="#00FF99"/><polygon points="67.0,81.0 74.0,78.0 81.0,81.0 81.0,90.0 74.0,93.0 67.0,90.0" fill="#66FFCC"/><polygon points="81.0,81.0 88.0,78.0 95.0,81.0 95.0,90.0 88.0,93.0 81.0,90.0" fill="#66FFFF"/><polygon points="95.0,81.0 102.0,78.0 109.0,81.0 109.0,90.0 102.0,93.0 95.0,90.0" fill="#66CCFF"/><polygon points="109.0,81.0 116.0,78.0 123.0,81.0 123.0,90.0 116.0,93.0 109.0,90.0" fill="#99CCFF"/><polygon points="123.0,81.0 130.0,78.0 137.0,81.0 137.0,90.0 130.0,93.0 123.0,90.0" fill="#9999FF"/><polygon points="137.0,81.0 144.0,78.0 151.0,81.0 151.0,90.0 144.0,93.0 137.0,90.0" fill="#9966FF"/><polygon points="151.0,81.0 158.0,78.0 165.0,81.0 165.0,90.0 158.0,93.0 151.0,90.0" fill="#9933FF"/><polygon points="165.0,81.0 172.0,78.0 179.0,81.0 179.0,90.0 172.0,93.0 165.0,90.0" fill="#9900FF"/><polygon points="18.0,93.0 25.0,90.0 32.0,93.0 32.0,102.0 25.0,105.0 18.0,102.0" fill="#006600"/><polygon points="32.0,93.0 39.0,90.0 46.0,93.0 46.0,102.0 39.0,105.0 32.0,102.0" fill="#00CC00"/><polygon points="46.0,93.0 53.0,90.0 60.0,93.0 60.0,102.0 53.0,105.0 46.0,102.0" fill="#00FF00"/><polygon points="60.0,93.0 67.0,90.0 74.0,93.0 74.0,102.0 67.0,105.0 60.0,102.0" fill="#66FF99"/><polygon points="74.0,93.0 81.0,90.0 88.0,93.0 88.0,102.0 81.0,105.0 74.0,102.0" fill="#99FFCC"/><polygon points="88.0,93.0 95.0,90.0 102.0,93.0 102.0,102.0 95.0,105.0 88.0,102.0" fill="#CCFFFF"/><polygon points="102.0,93.0 109.0,90.0 116.0,93.0 116.0,102.0 109.0,105.0 102.0,102.0" fill="#CCCCFF"/><polygon points="116.0,93.0 123.0,90.0 130.0,93.0 130.0,102.0 123.0,105.0 116.0,102.0" fill="#CC99FF"/><polygon points="130.0,93.0 137.0,90.0 144.0,93.0 144.0,102.0 137.0,105.0 130.0,102.0" fill="#CC66FF"/><polygon points="144.0,93.0 151.0,90.0 158.0,93.0 158.0,102.0 151.0,105.0 144.0,102.0" fill="#CC33FF"/><polygon points="158.0,93.0 165.0,90.0 172.0,93.0 172.0,102.0 165.0,105.0 158.0,102.0" fill="#CC00FF"/><polygon points="172.0,93.0 179.0,90.0 186.0,93.0 186.0,102.0 179.0,105.0 172.0,102.0" fill="#9900CC"/><polygon points="11.0,105.0 18.0,102.0 25.0,105.0 25.0,114.0 18.0,117.0 11.0,114.0" fill="#003300"/><polygon points="25.0,105.0 32.0,102.0 39.0,105.0 39.0,114.0 32.0,117.0 25.0,114.0" fill="#009933"/><polygon points="39.0,105.0 46.0,102.0 53.0,105.0 53.0,114.0 46.0,117.0 39.0,114.0" fill="#33CC33"/><polygon points="53.0,105.0 60.0,102.0 67.0,105.0 67.0,114.0 60.0,117.0 53.0,114.0" fill="#66FF66"/><polygon points="67.0,105.0 74.0,102.0 81.0,105.0 81.0,114.0 74.0,117.0 67.0,114.0" fill="#99FF99"/><polygon points="81.0,105.0 88.0,102.0 95.0,105.0 95.0,114.0 88.0,117.0 81.0,114.0" fill="#CCFFCC"/><polygon points="95.0,105.0 102.0,102.0 109.0,105.0 109.0,114.0 102.0,117.0 95.0,114.0" fill="#FFFFFF"/><polygon points="109.0,105.0 116.0,102.0 123.0,105.0 123.0,114.0 116.0,117.0 109.0,114.0" fill="#FFCCFF"/><polygon points="123.0,105.0 130.0,102.0 137.0,105.0 137.0,114.0 130.0,117.0 123.0,114.0" fill="#FF99FF"/><polygon points="137.0,105.0 144.0,102.0 151.0,105.0 151.0,114.0 144.0,117.0 137.0,114.0" fill="#FF66FF"/><polygon points="151.0,105.0 158.0,102.0 165.0,105.0 165.0,114.0 158.0,117.0 151.0,114.0" fill="#FF00FF"/><polygon points="165.0,105.0 172.0,102.0 179.0,105.0 179.0,114.0 172.0,117.0 165.0,114.0" fill="#CC00CC"/><polygon points="179.0,105.0 186.0,102.0 193.0,105.0 193.0,114.0 186.0,117.0 179.0,114.0" fill="#660066"/><polygon points="18.0,117.0 25.0,114.0 32.0,117.0 32.0,126.0 25.0,129.0 18.0,126.0" fill="#336600"/><polygon points="32.0,117.0 39.0,114.0 46.0,117.0 46.0,126.0 39.0,129.0 32.0,126.0" fill="#009900"/><polygon points="46.0,117.0 53.0,114.0 60.0,117.0 60.0,126.0 53.0,129.0 46.0,126.0" fill="#66FF33"/><polygon points="60.0,117.0 67.0,114.0 74.0,117.0 74.0,126.0 67.0,129.0 60.0,126.0" fill="#99FF66"/><polygon points="74.0,117.0 81.0,114.0 88.0,117.0 88.0,126.0 81.0,129.0 74.0,126.0" fill="#CCFF99"/><polygon points="88.0,117.0 95.0,114.0 102.0,117.0 102.0,126.0 95.0,129.0 88.0,126.0" fill="#FFFFCC"/><polygon points="102.0,117.0 109.0,114.0 116.0,117.0 116.0,126.0 109.0,129.0 102.0,126.0" fill="#FFCCCC"/><polygon points="116.0,117.0 123.0,114.0 130.0,117.0 130.0,126.0 123.0,129.0 116.0,126.0" fill="#FF99CC"/><polygon points="130.0,117.0 137.0,114.0 144.0,117.0 144.0,126.0 137.0,129.0 130.0,126.0" fill="#FF66CC"/><polygon points="144.0,117.0 151.0,114.0 158.0,117.0 158.0,126.0 151.0,129.0 144.0,126.0" fill="#FF33CC"/><polygon points="158.0,117.0 165.0,114.0 172.0,117.0 172.0,126.0 165.0,129.0 158.0,126.0" fill="#CC0099"/><polygon points="172.0,117.0 179.0,114.0 186.0,117.0 186.0,126.0 179.0,129.0 172.0,126.0" fill="#993399"/><polygon points="25.0,129.0 32.0,126.0 39.0,129.0 39.0,138.0 32.0,141.0 25.0,138.0" fill="#333300"/><polygon points="39.0,129.0 46.0,126.0 53.0,129.0 53.0,138.0 46.0,141.0 39.0,138.0" fill="#669900"/><polygon points="53.0,129.0 60.0,126.0 67.0,129.0 67.0,138.0 60.0,141.0 53.0,138.0" fill="#99FF33"/><polygon points="67.0,129.0 74.0,126.0 81.0,129.0 81.0,138.0 74.0,141.0 67.0,138.0" fill="#CCFF66"/><polygon points="81.0,129.0 88.0,126.0 95.0,129.0 95.0,138.0 88.0,141.0 81.0,138.0" fill="#FFFF99"/><polygon points="95.0,129.0 102.0,126.0 109.0,129.0 109.0,138.0 102.0,141.0 95.0,138.0" fill="#FFCC99"/><polygon points="109.0,129.0 116.0,126.0 123.0,129.0 123.0,138.0 116.0,141.0 109.0,138.0" fill="#FF9999"/><polygon points="123.0,129.0 130.0,126.0 137.0,129.0 137.0,138.0 130.0,141.0 123.0,138.0" fill="#FF6699"/><polygon points="137.0,129.0 144.0,126.0 151.0,129.0 151.0,138.0 144.0,141.0 137.0,138.0" fill="#FF3399"/><polygon points="151.0,129.0 158.0,126.0 165.0,129.0 165.0,138.0 158.0,141.0 151.0,138.0" fill="#CC3399"/><polygon points="165.0,129.0 172.0,126.0 179.0,129.0 179.0,138.0 172.0,141.0 165.0,138.0" fill="#990099"/><polygon points="32.0,141.0 39.0,138.0 46.0,141.0 46.0,150.0 39.0,153.0 32.0,150.0" fill="#666633"/><polygon points="46.0,141.0 53.0,138.0 60.0,141.0 60.0,150.0 53.0,153.0 46.0,150.0" fill="#99CC00"/><polygon points="60.0,141.0 67.0,138.0 74.0,141.0 74.0,150.0 67.0,153.0 60.0,150.0" fill="#CCFF33"/><polygon points="74.0,141.0 81.0,138.0 88.0,141.0 88.0,150.0 81.0,153.0 74.0,150.0" fill="#FFFF66"/><polygon points="88.0,141.0 95.0,138.0 102.0,141.0 102.0,150.0 95.0,153.0 88.0,150.0" fill="#FFCC66"/><polygon points="102.0,141.0 109.0,138.0 116.0,141.0 116.0,150.0 109.0,153.0 102.0,150.0" fill="#FF9966"/><polygon points="116.0,141.0 123.0,138.0 130.0,141.0 130.0,150.0 123.0,153.0 116.0,150.0" fill="#FF6666"/><polygon points="130.0,141.0 137.0,138.0 144.0,141.0 144.0,150.0 137.0,153.0 130.0,150.0" fill="#FF0066"/><polygon points="144.0,141.0 151.0,138.0 158.0,141.0 158.0,150.0 151.0,153.0 144.0,150.0" fill="#CC6699"/><polygon points="158.0,141.0 165.0,138.0 172.0,141.0 172.0,150.0 165.0,153.0 158.0,150.0" fill="#993366"/><polygon points="39.0,153.0 46.0,150.0 53.0,153.0 53.0,162.0 46.0,165.0 39.0,162.0" fill="#999966"/><polygon points="53.0,153.0 60.0,150.0 67.0,153.0 67.0,162.0 60.0,165.0 53.0,162.0" fill="#CCCC00"/><polygon points="67.0,153.0 74.0,150.0 81.0,153.0 81.0,162.0 74.0,165.0 67.0,162.0" fill="#FFFF00"/><polygon points="81.0,153.0 88.0,150.0 95.0,153.0 95.0,162.0 88.0,165.0 81.0,162.0" fill="#FFCC00"/><polygon points="95.0,153.0 102.0,150.0 109.0,153.0 109.0,162.0 102.0,165.0 95.0,162.0" fill="#FF9933"/><polygon points="109.0,153.0 116.0,150.0 123.0,153.0 123.0,162.0 116.0,165.0 109.0,162.0" fill="#FF6600"/><polygon points="123.0,153.0 130.0,150.0 137.0,153.0 137.0,162.0 130.0,165.0 123.0,162.0" fill="#FF5050"/><polygon points="137.0,153.0 144.0,150.0 151.0,153.0 151.0,162.0 144.0,165.0 137.0,162.0" fill="#CC0066"/><polygon points="151.0,153.0 158.0,150.0 165.0,153.0 165.0,162.0 158.0,165.0 151.0,162.0" fill="#660033"/><polygon points="46.0,165.0 53.0,162.0 60.0,165.0 60.0,174.0 53.0,177.0 46.0,174.0" fill="#996633"/><polygon points="60.0,165.0 67.0,162.0 74.0,165.0 74.0,174.0 67.0,177.0 60.0,174.0" fill="#CC9900"/><polygon points="74.0,165.0 81.0,162.0 88.0,165.0 88.0,174.0 81.0,177.0 74.0,174.0" fill="#FF9900"/><polygon points="88.0,165.0 95.0,162.0 102.0,165.0 102.0,174.0 95.0,177.0 88.0,174.0" fill="#CC6600"/><polygon points="102.0,165.0 109.0,162.0 116.0,165.0 116.0,174.0 109.0,177.0 102.0,174.0" fill="#FF3300"/><polygon points="116.0,165.0 123.0,162.0 130.0,165.0 130.0,174.0 123.0,177.0 116.0,174.0" fill="#FF0000"/><polygon points="130.0,165.0 137.0,162.0 144.0,165.0 144.0,174.0 137.0,177.0 130.0,174.0" fill="#CC0000"/><polygon points="144.0,165.0 151.0,162.0 158.0,165.0 158.0,174.0 151.0,177.0 144.0,174.0" fill="#990033"/><polygon points="53.0,177.0 60.0,174.0 67.0,177.0 67.0,186.0 60.0,189.0 53.0,186.0" fill="#663300"/><polygon points="67.0,177.0 74.0,174.0 81.0,177.0 81.0,186.0 74.0,189.0 67.0,186.0" fill="#996600"/><polygon points="81.0,177.0 88.0,174.0 95.0,177.0 95.0,186.0 88.0,189.0 81.0,186.0" fill="#CC3300"/><polygon points="95.0,177.0 102.0,174.0 109.0,177.0 109.0,186.0 102.0,189.0 95.0,186.0" fill="#993300"/><polygon points="109.0,177.0 116.0,174.0 123.0,177.0 123.0,186.0 116.0,189.0 109.0,186.0" fill="#990000"/><polygon points="123.0,177.0 130.0,174.0 137.0,177.0 137.0,186.0 130.0,189.0 123.0,186.0" fill="#800000"/><polygon points="137.0,177.0 144.0,174.0 151.0,177.0 151.0,186.0 144.0,189.0 137.0,186.0" fill="#993333"/><polygon points="46.0,205.0 53.0,202.0 60.0,205.0 60.0,214.0 53.0,217.0 46.0,214.0" fill="#F8F8F8"/><polygon points="60.0,205.0 67.0,202.0 74.0,205.0 74.0,214.0 67.0,217.0 60.0,214.0" fill="#DDDDDD"/><polygon points="74.0,205.0 81.0,202.0 88.0,205.0 88.0,214.0 81.0,217.0 74.0,214.0" fill="#B2B2B2"/><polygon points="88.0,205.0 95.0,202.0 102.0,205.0 102.0,214.0 95.0,217.0 88.0,214.0" fill="#808080"/><polygon points="102.0,205.0 109.0,202.0 116.0,205.0 116.0,214.0 109.0,217.0 102.0,214.0" fill="#5F5F5F"/><polygon points="116.0,205.0 123.0,202.0 130.0,205.0 130.0,214.0 123.0,217.0 116.0,214.0" fill="#333333"/><polygon points="130.0,205.0 137.0,202.0 144.0,205.0 144.0,214.0 137.0,217.0 130.0,214.0" fill="#1C1C1C"/><polygon points="144.0,205.0 151.0,202.0 158.0,205.0 158.0,214.0 151.0,217.0 144.0,214.0" fill="#080808"/><polygon points="53,217.0 60,214.0 67,217.0 67,226.0 60,229.0 53,226.0" fill="#EAEAEA"/><polygon points="67,217.0 74,214.0 81,217.0 81,226.0 74,229.0 67,226.0" fill="#C0C0C0"/><polygon points="81,217.0 88,214.0 95,217.0 95,226.0 88,229.0 81,226.0" fill="#969696"/><polygon points="95,217.0 102,214.0 109,217.0 109,226.0 102,229.0 95,226.0" fill="#777777"/><polygon points="109,217.0 116,214.0 123,217.0 123,226.0 116,229.0 109,226.0" fill="#4D4D4D"/><polygon points="123,217.0 130,214.0 137,217.0 137,226.0 130,229.0 123,226.0" fill="#292929"/><polygon points="137,217.0 144,214.0 151,217.0 151,226.0 144,229.0 137,226.0" fill="#111111"/><polygon points="165,205.0 179,198.0 193,205.0 193,222.0 179,229.0 165,222.0" fill="#000"/><polygon points="85.50000000000001,115.19999999999999 95.30000000000001,110.19999999999999 105.10000000000001,115.19999999999999 105.10000000000001,127.19999999999999 95.30000000000001,132.2 85.50000000000001,127.19999999999999" fill="#fff" stroke="#000" stroke-width="1.3"/><polygon points="88.80000000000001,116.89999999999999 95.30000000000001,113.69999999999999 101.80000000000001,116.89999999999999 101.80000000000001,125.49999999999999 95.30000000000001,128.7 88.80000000000001,125.49999999999999" fill="#FFFFCC" stroke="#222" stroke-width="0.9"/></svg>
<div class="abs" style="left:562px;top:291px;width:74px;height:22px;border:1px solid #3C7FB1;border-radius:3px;background:linear-gradient(#F2F2F2,#EBEBEB 50%,#DDDDDD 51%,#CFCFCF);box-shadow:inset 0 0 0 1px #48C0F0, inset 0 0 0 2px #fff;z-index:4"></div>
<div class="t" style="left:562px;width:74px;text-align:center;top:297.0px;font-size:11px;color:#000;z-index:5">OK</div>
<div class="abs" style="left:562px;top:321px;width:74px;height:21px;border:1px solid #707070;border-radius:3px;background:linear-gradient(#F2F2F2,#EBEBEB 50%,#DDDDDD 51%,#CFCFCF);box-shadow:inset 0 0 0 1px #fff;z-index:4"></div>
<div class="t" style="left:562px;width:74px;text-align:center;top:326.5px;font-size:11px;color:#000;z-index:5">Cancel</div>
<div class="t" style="left:566px;width:60px;text-align:center;top:519px;font-size:11px;color:#000;z-index:5">New</div>
<div class="abs" style="left:574px;top:536px;width:49px;height:49px;border:1px solid #646464;background:linear-gradient(#FFFFCC 0 46%,#FFFF00 46%);z-index:5"></div>
<div class="t" style="left:556px;width:80px;text-align:center;top:594px;font-size:11px;color:#000;z-index:5">Current</div>
<svg class="abs" style="left:631px;top:600px;z-index:6" width="12" height="12"><path d="M11 1 L1 11 M11 5 L5 11 M11 9 L9 11" stroke="#9A9A9A" stroke-width="1.4"/></svg></div>
</body></html>
